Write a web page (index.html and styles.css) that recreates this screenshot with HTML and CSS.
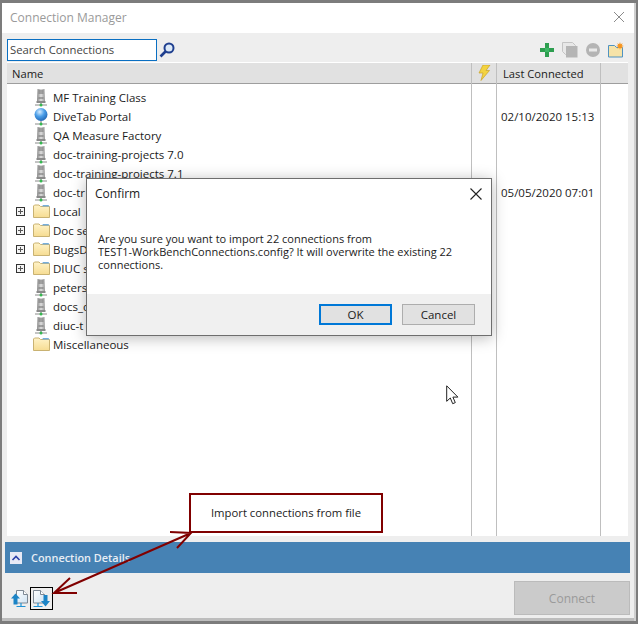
FILE: index.html
```html
<!DOCTYPE html>
<html lang="en">
<head>
<meta charset="utf-8">
<title>Connection Manager</title>
<link rel="stylesheet" href="styles.css">
</head>
<body>
<svg class="defs" width="0" height="0" aria-hidden="true">
  <defs>
    <linearGradient id="srv" x1="0" x2="1" y1="0" y2="0"><stop offset="0" stop-color="#8a8a8a"/><stop offset="0.5" stop-color="#dedede"/><stop offset="1" stop-color="#979797"/></linearGradient>
    <radialGradient id="globe" cx="0.4" cy="0.3" r="0.8"><stop offset="0" stop-color="#d8edff"/><stop offset="0.45" stop-color="#4a9ee8"/><stop offset="1" stop-color="#1a5aa8"/></radialGradient>
    <linearGradient id="fold" x1="0" x2="0" y1="0" y2="1"><stop offset="0" stop-color="#fff3c8"/><stop offset="1" stop-color="#f6dc92"/></linearGradient>
    <linearGradient id="docg" x1="0" x2="1" y1="0" y2="1"><stop offset="0" stop-color="#ffffff"/><stop offset="1" stop-color="#cfe3f3"/></linearGradient>
    <symbol id="i-server" viewBox="0 0 16 19">
      <path d="M4.500 1h7l.5 12H4z" fill="url(#srv)"/>
      <path d="M5.500 3h5M5.500 5h5" stroke="#6a6a6a" stroke-width="1"/>
      <rect x="5.500" y="9.500" width="5" height="1" fill="#6a6a6a"/>
      <rect x="3.500" y="13" width="9" height="2" fill="#8a8a8a"/>
      <path d="M2 17h12" stroke="#8a8a8a" stroke-width="1"/>
      <path d="M8 15v1" stroke="#777"/>
      <circle cx="8" cy="17" r="1.500" fill="#35b850"/>
    </symbol>
    <symbol id="i-globe" viewBox="0 0 16 19">
      <circle cx="8" cy="7.500" r="6.500" fill="url(#globe)"/>
      <path d="M2 17h12" stroke="#8a8a8a" stroke-width="1"/>
      <path d="M8 14v3" stroke="#777"/>
      <circle cx="8" cy="17" r="1.500" fill="#35b850"/>
    </symbol>
    <symbol id="i-folder" viewBox="0 0 17 14">
      <path d="M.5 13.500V2l1-1h4.500l1.500 1.500h9v11z" fill="url(#fold)" stroke="#c9b272"/>
      <path d="M10 1h5.500l1 1.500H9z" fill="#76aedb"/>
    </symbol>
  </defs>
</svg>

<div class="window">
  <header class="titlebar">
    <span class="title">Connection Manager</span>
    <svg class="close-main" viewBox="0 0 10 10" width="10" height="10"><path d="M0 0l10 10M10 0L0 10" stroke="#8b8b8b" stroke-width="1" fill="none"/></svg>
  </header>

  <div class="content">
    <div class="toolbar">
      <div class="search">Search Connections</div>
      <svg class="search-icon" viewBox="0 0 16 16" width="16" height="16">
        <circle cx="10" cy="6" r="4.500" fill="#dce9f7" stroke="#1f3f8f" stroke-width="2"/>
        <path d="M6.500 9.500L1.500 14.500" stroke="#1f3f8f" stroke-width="2.600"/>
      </svg>
      <div class="tools">
        <svg viewBox="0 0 14 14" width="14" height="14"><path d="M5 0h4v5h5v4H9v5H5V9H0V5h5z" fill="#2e9e50"/><path d="M5 5h4v4H5z" fill="#3cb765"/></svg>
        <svg viewBox="0 0 16 16" width="16" height="16"><path d="M.5.500h10l3 3v9h-10l-3-3z" fill="#e8e8e8" stroke="#c4c4c4"/><rect x="4" y="4" width="11.500" height="11.500" fill="#b5b5b5"/></svg>
        <svg viewBox="0 0 14 14" width="14" height="14"><circle cx="7" cy="7" r="7" fill="#b4b4b4"/><rect x="3" y="5.500" width="8" height="3" fill="#e9e9e9"/></svg>
        <svg viewBox="0 0 16 16" width="16" height="16"><path d="M.5 15V3.500h6l2 2h6V15z" fill="#f6e3a8" stroke="#4f92c2"/><path d="M12 0l.7 2.200 2-1-1 2 2.200.8-2.200.8 1 2-2-1L12 8l-.7-2.200-2 1 1-2L8 4l2.200-.8-1-2 2 1z" fill="#f7941d"/></svg>
      </div>
    </div>

    <div class="list">
      <section class="col col-name">
        <div class="col-head">Name</div>
        <ul class="tree">
          <li class="row"><svg class="ico-s"><use href="#i-server"/></svg><span>MF Training Class</span></li>
          <li class="row"><svg class="ico-s"><use href="#i-globe"/></svg><span>DiveTab Portal</span></li>
          <li class="row"><svg class="ico-s"><use href="#i-server"/></svg><span>QA Measure Factory</span></li>
          <li class="row"><svg class="ico-s"><use href="#i-server"/></svg><span>doc-training-projects 7.0</span></li>
          <li class="row"><svg class="ico-s"><use href="#i-server"/></svg><span>doc-training-projects 7.1</span></li>
          <li class="row"><svg class="ico-s"><use href="#i-server"/></svg><span>doc-tr</span></li>
          <li class="row"><i class="exp"></i><svg class="ico-f"><use href="#i-folder"/></svg><span>Local</span></li>
          <li class="row"><i class="exp"></i><svg class="ico-f"><use href="#i-folder"/></svg><span>Doc se</span></li>
          <li class="row"><i class="exp"></i><svg class="ico-f"><use href="#i-folder"/></svg><span>BugsD</span></li>
          <li class="row"><i class="exp"></i><svg class="ico-f"><use href="#i-folder"/></svg><span>DIUC s</span></li>
          <li class="row"><svg class="ico-s"><use href="#i-server"/></svg><span>peters</span></li>
          <li class="row"><svg class="ico-s"><use href="#i-server"/></svg><span>docs_d</span></li>
          <li class="row"><svg class="ico-s"><use href="#i-server"/></svg><span>diuc-t</span></li>
          <li class="row"><svg class="ico-f"><use href="#i-folder"/></svg><span>Miscellaneous</span></li>
        </ul>
      </section>
      <section class="col col-bolt">
        <div class="col-head">
          <svg viewBox="0 0 14 16" width="14" height="16"><path d="M6 0h7L9 5.500h3.500L4 15.500l2-7.500H2z" fill="#f3d340" stroke="#c9a227" stroke-width=".7"/></svg>
        </div>
      </section>
      <section class="col col-date">
        <div class="col-head">Last Connected</div>
        <ul class="tree">
          <li class="row"></li>
          <li class="row">02/10/2020 15:13</li>
          <li class="row"></li>
          <li class="row"></li>
          <li class="row"></li>
          <li class="row">05/05/2020 07:01</li>
        </ul>
      </section>
      <section class="col col-rest">
        <div class="col-head"></div>
      </section>
    </div>

    <div class="details">
      <span class="toggle"><svg viewBox="0 0 12 12" width="12" height="12"><path d="M2.500 8L6 4.500 9.500 8" fill="none" stroke="#2b3fa8" stroke-width="1.600"/></svg></span>
      <span>Connection Details</span>
    </div>

    <div class="footer">
      <div class="io">
        <span class="io-btn">
          <svg viewBox="0 0 18 18" width="18" height="18">
            <path d="M5.500.500h7l4 4v8.500h-11z" fill="url(#docg)" stroke="#7d8894"/>
            <path d="M12.500.500v4h4" fill="#fff" stroke="#7d8894"/>
            <path d="M10 13v3M5.500 16.500h9" stroke="#1f93d6" stroke-width="1.200"/>
            <path d="M4.500 3.500L0 8.500h2.500v6h4v-6H9z" fill="#1c84c6"/>
          </svg>
        </span>
        <span class="io-btn active">
          <svg viewBox="0 0 18 18" width="18" height="18">
            <path d="M.5.500h7l4 4v8.500h-11z" fill="url(#docg)" stroke="#7d8894"/>
            <path d="M7.500.500v4h4" fill="#fff" stroke="#7d8894"/>
            <path d="M5 13v3M.5 16.500h9" stroke="#1f93d6" stroke-width="1.200"/>
            <path d="M10.500 5v6H8l4.500 5.500L17 11h-2.500V5z" fill="#1c84c6"/>
          </svg>
        </span>
      </div>
      <div class="connect">Connect</div>
    </div>
  </div>

  <div class="dialog">
    <div class="dlg-head">
      <span>Confirm</span>
      <svg viewBox="0 0 12 12" width="12" height="12"><path d="M.5.500l11 11M11.500.500l-11 11" stroke="#222" stroke-width="1.100" fill="none"/></svg>
    </div>
    <p class="dlg-msg">Are you sure you want to import 22 connections from<br>TEST1-WorkBenchConnections.config? It will overwrite the existing 22<br>connections.</p>
    <div class="dlg-foot">
      <div class="btn btn-ok">OK</div>
      <div class="btn">Cancel</div>
    </div>
  </div>

  <svg class="cursor" viewBox="0 0 13 20" width="13" height="20"><path d="M.7.800v15.500l3.600-3.300 2.400 5.700 2.600-1.100-2.400-5.500h5z" fill="#fff" stroke="#222" stroke-width="1"/></svg>

  <div class="callout">Import connections from file</div>
  <svg class="arrow" viewBox="0 0 200 80" width="200" height="80">
    <path d="M143 3L6 63M122 2l21 1-14 15M22 48L6 63l23 0" fill="none" stroke="#800000" stroke-width="2"/>
  </svg>
</div>
</body>
</html>
```
FILE: styles.css
```css
* { box-sizing: border-box; }
html, body { margin: 0; padding: 0; }
body {
  width: 638px;
  height: 624px;
  overflow: hidden;
  background: #fff;
  font-family: "Open Sans", "Noto Sans", sans-serif;
  font-size: 11.5px;
  color: #1b1b1b;
}
.defs { position: absolute; }
ul { list-style: none; margin: 0; padding: 0; }

.window {
  position: relative;
  width: 638px;
  height: 624px;
  display: flex;
  flex-direction: column;
  background: #cfcfcf;
  border-style: solid;
  border-color: #7c7c7c;
  border-width: 3px 2px 3px 2px;
  padding-right: 2px;
}
.titlebar {
  height: 30px;
  flex: none;
  display: flex;
  align-items: center;
  justify-content: space-between;
  padding: 0 10px 2px 8px;
  color: #9a9a9a;
  background: #fff;
}
.title { font-size: 12px; }

.content {
  flex: 1;
  min-height: 0;
  display: flex;
  flex-direction: column;
  background: #eee;
  padding: 0 4px 0 3px;
  border-bottom: 3px solid #bdbdbd;
}
.toolbar {
  height: 29px;
  flex: none;
  display: flex;
  align-items: center;
  padding: 6px 6px 1px 2px;
}
.search {
  width: 150px;
  height: 22px;
  border: 1px solid #0a6fc2;
  background: #fff;
  padding: 0 2px;
  line-height: 19px;
  font-size: 11.3px;
  color: #444;
}
.search-icon { margin-left: 2px; }
.tools {
  margin-left: auto;
  display: flex;
  align-items: center;
  gap: 8px;
}

.list {
  flex: none;
  height: 474px;
  margin: 0 2px 0 2px;
  background: #fff;
  padding-top: 1px;
  display: flex;
}
.col {
  display: flex;
  flex-direction: column;
  border-right: 1px solid #bfbfbf;
}
.col-name { width: 465px; }
.col-bolt { width: 25px; }
.col-date { width: 104px; }
.col-rest { flex: none; width: 27px; border-right: 0; }
.col-head {
  height: 21px;
  flex: none;
  background: #e1e1e1;
  border-bottom: 1px solid #9e9e9e;
  padding-top: 1px;
  display: flex;
  align-items: center;
  font-size: 11.2px;
}
.col-name .col-head { padding-left: 5px; }
.col-date .col-head { padding-left: 6px; }
.col-bolt .col-head { justify-content: center; padding-top: 0; }
.tree { padding-top: 4px; }
.row {
  height: 19px;
  display: flex;
  align-items: center;
  white-space: nowrap;
  padding-left: 26px;
  font-size: 11.5px;
}
.col-date .row { padding-left: 4px; }
.ico-s { width: 16px; height: 19px; margin-right: 4px; flex: none; }
.ico-f { width: 17px; height: 14px; margin-right: 3px; margin-bottom: 2px; flex: none; }
.exp {
  width: 9px;
  height: 9px;
  margin-left: -17px;
  margin-right: 8px;
  margin-bottom: 1px;
  border: 1px solid #333;
  flex: none;
  background:
    linear-gradient(#555, #555) center / 5px 1px no-repeat,
    linear-gradient(#555, #555) center / 1px 5px no-repeat,
    #f4f4f4;
}

.details {
  flex: none;
  height: 31px;
  margin-top: 6px;
  background: #4682b4;
  color: #e8eef4;
  font-weight: 600;
  font-size: 10.9px;
  display: flex;
  align-items: center;
  padding-left: 5px;
  gap: 9px;
}
.toggle {
  width: 12px;
  height: 12px;
  background: #e6e9f5;
  display: flex;
}
.footer {
  flex: 1;
  display: flex;
  align-items: flex-start;
  justify-content: space-between;
  padding: 8px 0 0 6px;
}
.io { display: flex; align-items: center; padding-top: 7px; }
.io-btn { display: flex; width: 19px; height: 18px; }
.io-btn.active {
  width: 23px;
  height: 23px;
  border: 1px solid #000;
  align-items: center;
  justify-content: center;
  margin-top: -1px;
}
.connect {
  width: 116px;
  height: 34px;
  background: #cbcbcb;
  border: 1px solid #bbb;
  color: #9a9a9a;
  text-align: center;
  line-height: 33px;
  font-size: 12px;
}

.dialog {
  position: absolute;
  left: 84px;
  top: 175px;
  width: 406px;
  height: 158px;
  background: #fff;
  border: 1px solid #6e6e6e;
  box-shadow: 0 2px 14px rgba(0, 0, 0, 0.28);
  display: flex;
  flex-direction: column;
}
.dlg-head {
  height: 29px;
  flex: none;
  display: flex;
  align-items: center;
  justify-content: space-between;
  padding: 0 9px 0 8px;
  font-size: 12px;
}
.dlg-msg {
  flex: 1;
  margin: 0;
  padding: 24px 20px 0 11px;
  font-size: 11px;
  line-height: 13px;
}
.dlg-foot {
  flex: none;
  height: 41px;
  background: #f0f0f0;
  display: flex;
  justify-content: flex-end;
  align-items: center;
  gap: 10px;
  padding: 0 16px;
}
.btn {
  width: 73px;
  height: 21px;
  background: #e1e1e1;
  border: 1px solid #adadad;
  text-align: center;
  line-height: 19px;
  font-size: 11.5px;
}
.btn-ok { border: 2px solid #0078d7; line-height: 17px; }

.cursor { position: absolute; left: 444px; top: 382px; }
.callout {
  position: absolute;
  left: 187px;
  top: 490px;
  width: 194px;
  height: 40px;
  background: #fff;
  border: 2px solid #800000;
  text-align: center;
  line-height: 36px;
  font-size: 11.3px;
}
.arrow { position: absolute; left: 46px; top: 527px; pointer-events: none; }
```
